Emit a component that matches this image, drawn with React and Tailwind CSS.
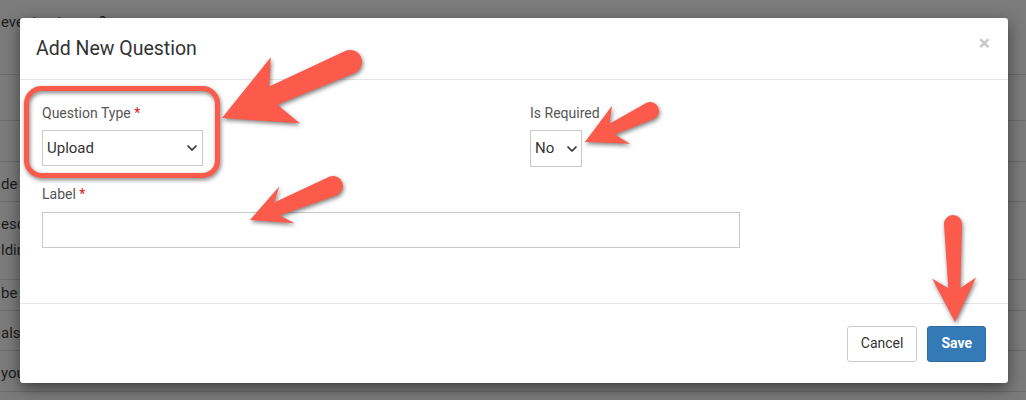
import React from "react";

const RED = "#fc5a4a";

function Arrow({ x1, y1, x2, y2, hb, w, hj, sj, st }) {
  const dx = x2 - x1;
  const dy = y2 - y1;
  const L = Math.hypot(dx, dy);
  const a = (Math.atan2(dy, dx) * 180) / Math.PI;
  const d = `M0,${-st} L${L - hj},${-sj} L${L - hb},${-w} L${L},0 L${L - hb},${w} L${L - hj},${sj} L0,${st} A${st},${st} 0 0 1 0,${-st} Z`;
  return <path transform={`translate(${x1} ${y1}) rotate(${a})`} d={d} fill={RED} />;
}

function Chevron() {
  return (
    <svg width="10" height="6" viewBox="0 0 10 6" className="shrink-0">
      <polyline points="1,1 5,5 9,1" fill="none" stroke="#333" strokeWidth="1.7" strokeLinecap="round" strokeLinejoin="round" />
    </svg>
  );
}

function Label({ children, req }) {
  return (
    <div className="h-[20px] leading-[20px] text-[14px] text-[#555] whitespace-nowrap">
      {children}
      {req && <span className="text-[#e8141b]"> *</span>}
    </div>
  );
}

const rows = [
  { h: "h-[75px]", lines: ["event category?"], pt: "pt-[9px]" },
  { h: "h-[46px]", lines: [] },
  { h: "h-[41px]", lines: [] },
  { h: "h-[40px]", lines: ["de"], pt: "pt-[9px]" },
  { h: "h-[78px]", lines: ["esc", "ldin"], pt: "pt-[9px]" },
  { h: "h-[31px]", lines: ["be u"], pt: "pt-[0px]" },
  { h: "h-[40px]", lines: ["also"], pt: "pt-[9px]" },
  { h: "h-[41px]", lines: ["you"], pt: "pt-[9px]" },
];

export default function App() {
  return (
    <div className="relative w-[1026px] h-[400px] overflow-hidden bg-[#7b7b7b] font-['Roboto',sans-serif]">
      {/* page behind the overlay */}
      <div className="flex flex-col">
        {rows.map((r, i) => (
          <div key={i} className={`${r.h} ${r.pt || ""} border-b border-[#6b6b6b] text-[15px] leading-[26px] text-[#1b1b1b] whitespace-nowrap`}>
            {r.lines.map((l, j) => (
              <div key={j} className="pl-[1px]">{l}</div>
            ))}
          </div>
        ))}
      </div>

      {/* modal */}
      <div className="absolute left-[20px] top-[18px] w-[988px] h-[365px] bg-white rounded-[3px] shadow-[0_5px_15px_rgba(0,0,0,0.5)] flex flex-col">
        <div className="h-[62px] border-b border-[#e5e5e5] flex items-center justify-between pl-[16px] pr-[18px]">
          <div className="text-[19.5px] text-[#333]">Add New Question</div>
          <div className="text-[21px] font-bold leading-none text-[#c8c8c8] mb-[10px]">×</div>
        </div>

        <div className="flex-1 px-[22px] pt-[23px]">
          <div className="grid grid-cols-[488px_1fr]">
            <div className="flex flex-col gap-[7px]">
              <Label req>Question Type</Label>
              <div className="w-[161px] h-[36px] border border-[#c9c9c9] flex items-center justify-between pl-[4px] pr-[5px] text-[15px] text-[#333]">
                <span>Upload</span>
                <Chevron />
              </div>
            </div>
            <div className="flex flex-col gap-[7px]">
              <Label>Is Required</Label>
              <div className="w-[52px] h-[37px] border border-[#c9c9c9] flex items-center justify-between pl-[4px] pr-[4px] text-[15px] text-[#333]">
                <span>No</span>
                <Chevron />
              </div>
            </div>
          </div>
          <div className="mt-[17px] flex flex-col gap-[8px]">
            <Label req>Label</Label>
            <div className="w-[698px] h-[36px] border border-[#c9c9c9]" />
          </div>
        </div>

        <div className="h-[80px] border-t border-[#e5e5e5] flex items-center justify-end gap-[10px] pr-[22px]">
          <div className="h-[36px] px-[13px] flex items-center border border-[#cccccc] rounded-[3px] text-[14px] text-[#333] bg-white">Cancel</div>
          <div className="h-[36px] px-[13px] flex items-center border border-[#2e6da4] rounded-[3px] text-[14px] font-bold text-white bg-[#337ab7]">Save</div>
        </div>
      </div>

      {/* annotations */}
      <svg className="absolute left-0 top-0 pointer-events-none drop-shadow-[1px_2px_2px_rgba(0,0,0,0.5)]" width="1026" height="400" viewBox="0 0 1026 400">
        <rect x="26.5" y="88.5" width="191" height="87" rx="15" fill="none" stroke={RED} strokeWidth="5" />
        <Arrow x1={350} y1={62} x2={222} y2={118} hb={69} w={36} hj={56} sj={10} st={12} />
        <Arrow x1={650} y1={111} x2={585} y2={142} hb={40} w={21} hj={30} sj={6} st={9} />
        <Arrow x1={333} y1={186} x2={250} y2={220} hb={40} w={20} hj={29} sj={7} st={10} />
        <Arrow x1={953} y1={224} x2={955} y2={322} hb={44} w={22} hj={34} sj={6} st={9} />
      </svg>
    </div>
  );
}
